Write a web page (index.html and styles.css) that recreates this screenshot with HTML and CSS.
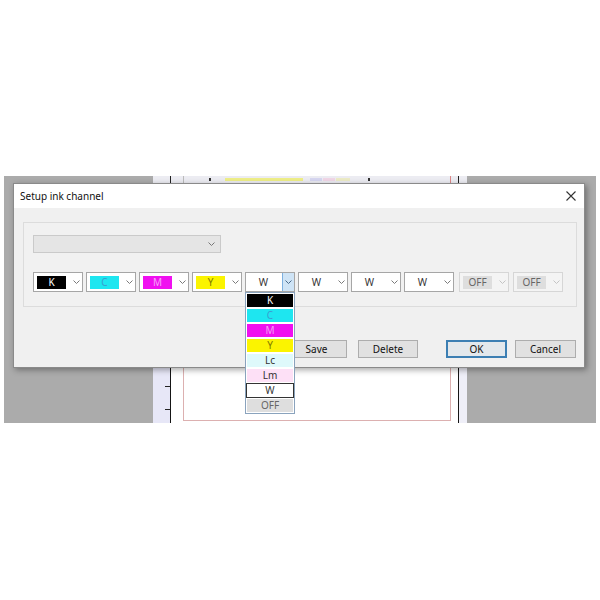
FILE: index.html
```html
<!DOCTYPE html>
<html>
<head>
<meta charset="utf-8">
<link rel="stylesheet" href="styles.css">
</head>
<body>
<div class="screen">
  <div class="topbar">
    <div class="gl"></div>
    <div class="hruler">
      <span class="mk mk-b" style="left:17px"></span>
      <span class="mk mk-g" style="left:30px"></span>
      <span class="mk mk-dot" style="left:56px"></span>
      <span class="band band-y" style="left:72px;width:78px"></span>
      <span class="band band-l" style="left:157px;width:12px"></span>
      <span class="band band-p" style="left:170px;width:12px"></span>
      <span class="band band-yy" style="left:183px;width:14px"></span>
      <span class="mk mk-dot" style="left:215px"></span>
      <span class="mk mk-r" style="left:297px"></span>
      <span class="mk mk-b" style="left:305px"></span>
    </div>
    <div class="gr"></div>
  </div>
  <div class="workspace">
    <div class="gray-l"></div>
    <div class="vruler">
      <span class="tick" style="top:203px"></span>
      <span class="tick" style="top:226px"></span>
    </div>
    <div class="vline"></div>
    <div class="canvas"><div class="page"></div></div>
    <div class="vline"></div>
    <div class="rstrip"></div>
    <div class="gray-r"></div>
  </div>

  <div class="dialog">
    <div class="titlebar">
      <span class="title">Setup ink channel</span>
      <svg class="close" width="10" height="10" viewBox="0 0 10 10"><path d="M0.5 0.5 L9.5 9.5 M9.5 0.5 L0.5 9.5" stroke="#333" stroke-width="1.1" fill="none"/></svg>
    </div>
    <div class="body">
      <div class="panel">
        <div class="bigcombo">
          <svg class="chev" width="7" height="4" viewBox="0 0 7 4"><path d="M0.5 0.5 L3.5 3.5 L6.5 0.5" stroke="#777" fill="none"/></svg>
        </div>
        <div class="row">
          <div class="combo"><span class="sw k">K</span><span class="dd"><svg width="7" height="4" viewBox="0 0 7 4"><path d="M0.5 0.5 L3.5 3.5 L6.5 0.5" stroke="#7a7a7a" fill="none"/></svg></span></div>
          <div class="combo"><span class="sw c">C</span><span class="dd"><svg width="7" height="4" viewBox="0 0 7 4"><path d="M0.5 0.5 L3.5 3.5 L6.5 0.5" stroke="#7a7a7a" fill="none"/></svg></span></div>
          <div class="combo"><span class="sw m">M</span><span class="dd"><svg width="7" height="4" viewBox="0 0 7 4"><path d="M0.5 0.5 L3.5 3.5 L6.5 0.5" stroke="#7a7a7a" fill="none"/></svg></span></div>
          <div class="combo"><span class="sw y">Y</span><span class="dd"><svg width="7" height="4" viewBox="0 0 7 4"><path d="M0.5 0.5 L3.5 3.5 L6.5 0.5" stroke="#7a7a7a" fill="none"/></svg></span></div>
          <div class="combo open"><span class="sw w">W</span><span class="dd"><svg width="7" height="4" viewBox="0 0 7 4"><path d="M0.5 0.5 L3.5 3.5 L6.5 0.5" stroke="#4a6a8a" fill="none"/></svg></span>
            <div class="list">
              <div class="li k">K</div>
              <div class="li c">C</div>
              <div class="li m">M</div>
              <div class="li y">Y</div>
              <div class="li lc">Lc</div>
              <div class="li lm">Lm</div>
              <div class="li w sel">W</div>
              <div class="li off">OFF</div>
            </div>
          </div>
          <div class="combo"><span class="sw w">W</span><span class="dd"><svg width="7" height="4" viewBox="0 0 7 4"><path d="M0.5 0.5 L3.5 3.5 L6.5 0.5" stroke="#7a7a7a" fill="none"/></svg></span></div>
          <div class="combo"><span class="sw w">W</span><span class="dd"><svg width="7" height="4" viewBox="0 0 7 4"><path d="M0.5 0.5 L3.5 3.5 L6.5 0.5" stroke="#7a7a7a" fill="none"/></svg></span></div>
          <div class="combo"><span class="sw w">W</span><span class="dd"><svg width="7" height="4" viewBox="0 0 7 4"><path d="M0.5 0.5 L3.5 3.5 L6.5 0.5" stroke="#7a7a7a" fill="none"/></svg></span></div>
          <div class="combo dis"><span class="sw off">OFF</span><span class="dd"><svg width="7" height="4" viewBox="0 0 7 4"><path d="M0.5 0.5 L3.5 3.5 L6.5 0.5" stroke="#c4c4c4" fill="none"/></svg></span></div>
          <div class="combo dis"><span class="sw off">OFF</span><span class="dd"><svg width="7" height="4" viewBox="0 0 7 4"><path d="M0.5 0.5 L3.5 3.5 L6.5 0.5" stroke="#c4c4c4" fill="none"/></svg></span></div>
        </div>
      </div>
      <div class="buttons">
        <div class="btn save">Save</div>
        <div class="btn delete">Delete</div>
        <div class="btn ok">OK</div>
        <div class="btn cancel">Cancel</div>
      </div>
    </div>
  </div>
</div>
</body>
</html>
```
FILE: styles.css
```css
* { box-sizing: border-box; }
body {
  margin: 0;
  background: #fff;
  font-family: "Noto Sans", "Open Sans", sans-serif;
  color: #111;
}
.screen {
  position: relative;
  margin: 176px 0 0 4px;
  width: 592px;
  height: 247px;
  background: #ababab;
  display: flex;
  flex-direction: column;
}
.topbar { height: 7px; display: flex; }
.topbar .gl { width: 149px; background: #ababab; }
.topbar .gr { flex: 1; background: #ababab; }
.hruler { width: 314px; background: #ececf2; position: relative; }
.mk { position: absolute; top: 0; width: 1px; height: 7px; }
.mk-b { background: #222; }
.mk-g { background: #bbb; }
.mk-r { background: #d88; }
.mk-dot { top: 2px; width: 2px; height: 3px; background: #333; }
.band { position: absolute; top: 2px; height: 3px; }
.band-y { background: #eeee88; }
.band-l { background: #d6d6f0; }
.band-p { background: #f0d6e6; }
.band-yy { background: #ecebc6; }

.workspace { flex: 1; display: flex; }
.gray-l { width: 149px; background: #ababab; }
.vruler { width: 17px; background: #e7e7f7; position: relative; }
.tick { position: absolute; left: 12px; width: 5px; height: 1px; background: #222; }
.vline { width: 1px; background: #151515; }
.canvas { width: 287px; background: #fff; padding: 0 0 2px 12px; display: flex; }
.page { width: 268px; border: 1px solid #dcb0b0; }
.rstrip { width: 8px; background: #efeff8; }
.gray-r { flex: 1; background: #ababab; }

.dialog {
  position: absolute;
  left: 9px;
  top: 7px;
  width: 572px;
  height: 185px;
  border: 1px solid #8a8a8a;
  box-shadow: 2px 2px 6px rgba(0,0,0,0.35);
  display: flex;
  flex-direction: column;
  background: #f0f0f0;
}
.titlebar {
  height: 24px;
  background: #fff;
  display: flex;
  align-items: center;
  padding: 0 7px 0 6px;
}
.title { font-size: 10px; color: #111; }
.close { margin-left: auto; margin-right: 1px; }

.body { flex: 1; padding: 14px 0 0 9px; }
.panel {
  width: 554px;
  height: 85px;
  border: 1px solid #dcdcdc;
  background: #f1f1f1;
  padding: 12px 0 0 9px;
}
.bigcombo {
  width: 188px;
  height: 18px;
  border: 1px solid #cacaca;
  background: #e5e5e5;
  display: flex;
  align-items: center;
  justify-content: flex-end;
  padding-right: 5px;
}
.row { display: flex; gap: 3px; margin-top: 19px; }
.combo {
  position: relative;
  width: 50px;
  height: 20px;
  border: 1px solid #a6a6a6;
  background: #fff;
  display: flex;
  align-items: center;
  padding-left: 3px;
}
.combo.dis { border-color: #d6d6d6; background: #f4f4f4; margin-left: 2px; }
.combo.dis + .combo.dis { margin-left: 1px; }
.sw {
  width: 29px;
  height: 13px;
  font-size: 10px;
  line-height: 13px;
  text-align: center;
}
.dd {
  margin-left: auto;
  width: 12px;
  height: 18px;
  display: flex;
  align-items: center;
  justify-content: center;
}
.combo.open .dd { background: #cfe4f6; border-left: 1px solid #7db0e0; }

.k { background: #000; color: #fff; }
.c { background: #1ee6f0; color: #3a9fd0; }
.m { background: #f010f0; color: #f7a0f7; }
.y { background: #fbf400; color: #807a00; }
.w { background: #fff; color: #333; }
.lc { background: #def9fb; color: #333; }
.lm { background: #fde0f6; color: #333; }
.off { background: #dedede; color: #666; }

.list {
  position: absolute;
  top: 19px;
  left: -1px;
  width: 50px;
  border: 1px solid #8aa3bd;
  background: #fff;
  padding: 1px;
  display: flex;
  flex-direction: column;
  gap: 2px;
  z-index: 5;
}
.li {
  height: 13px;
  font-size: 10px;
  line-height: 13px;
  text-align: center;
}
.li.sel { outline: 1px solid #333; outline-offset: 0; }

.buttons {
  display: flex;
  justify-content: flex-end;
  padding-right: 8px;
  margin-top: 33px;
}
.btn {
  height: 18px;
  width: 61px;
  border: 1px solid #adadad;
  background: #e1e1e1;
  font-size: 10px;
  display: flex;
  align-items: center;
  justify-content: center;
  color: #111;
}
.btn.delete { width: 60px; margin-left: 11px; }
.btn.ok { margin-left: 28px; border: 2px solid #3c7fb3; background: #e3e8ec; }
.btn.cancel { margin-left: 8px; }
```
